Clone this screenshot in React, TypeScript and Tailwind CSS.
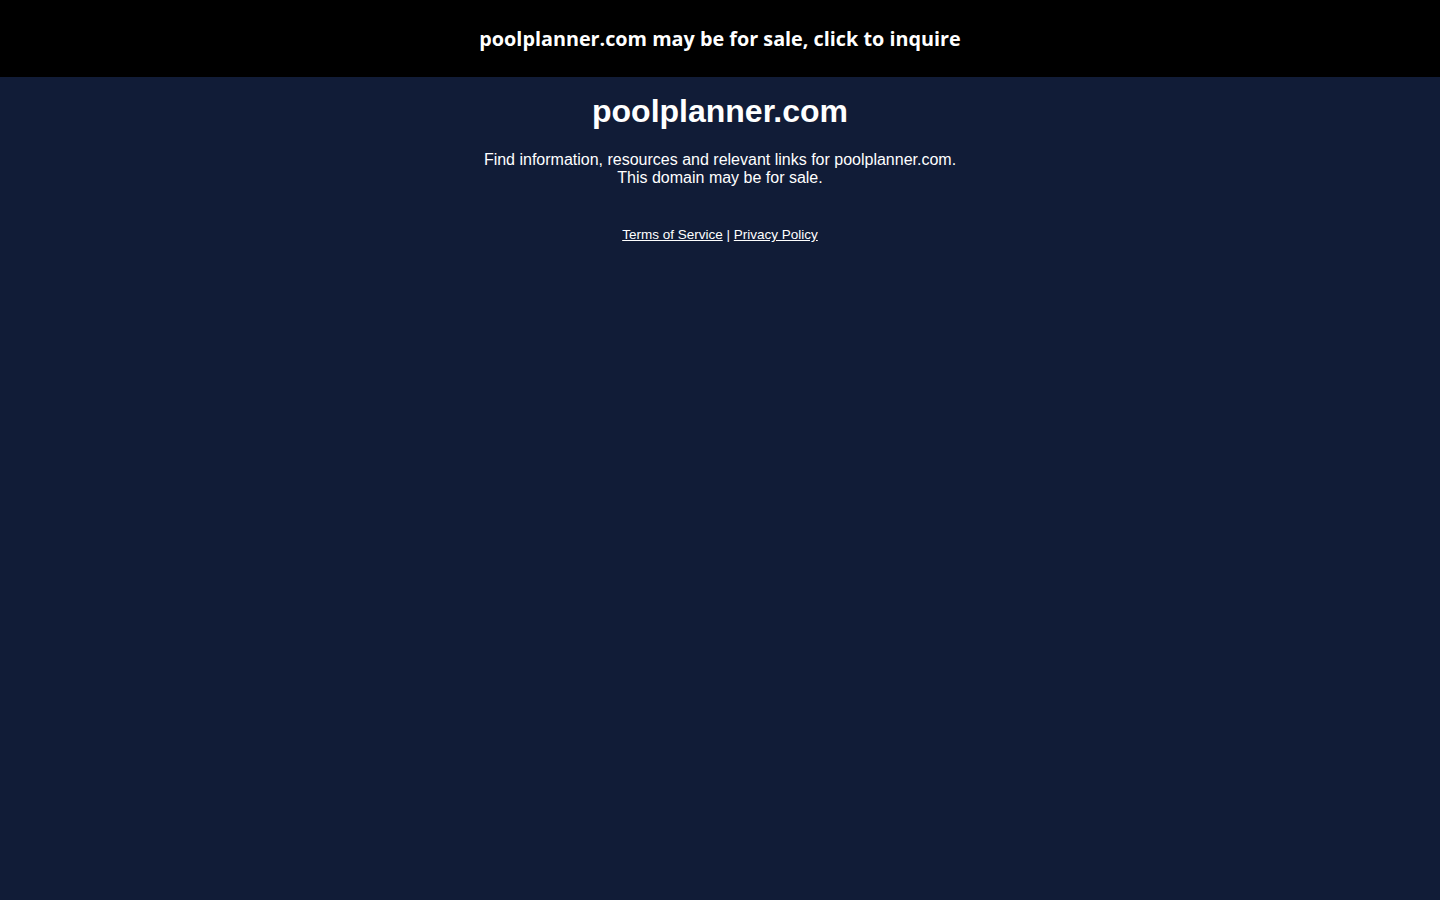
export default function App() {
  return (
    <div className="min-h-screen bg-[#111c37] text-white font-['Liberation_Sans',Arial,sans-serif]">
      <a
        href="#"
        className="flex h-[77px] items-center justify-center bg-black font-['Open_Sans',sans-serif] text-[19.8px] font-bold text-white"
      >
        poolplanner.com may be for sale, click to inquire
      </a>
      <div className="text-center">
        <h1 className="mt-[16px] text-[32px] font-bold leading-[37px]">poolplanner.com</h1>
        <p className="mt-[21px] text-[16px] leading-[18px]">
          Find information, resources and relevant links for poolplanner.com.
          <br />
          This domain may be for sale.
        </p>
        <div className="mt-[40px] text-[13.5px] leading-[15px]">
          <a href="#" className="underline">
            Terms of Service
          </a>{" "}
          |{" "}
          <a href="#" className="underline">
            Privacy Policy
          </a>
        </div>
      </div>
    </div>
  );
}
